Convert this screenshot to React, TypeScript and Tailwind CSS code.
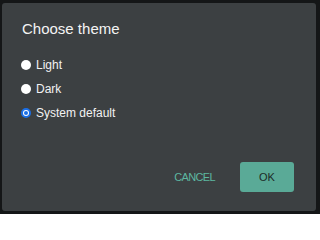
import React from "react";

function Radio({ checked, label }: { checked?: boolean; label: string }) {
  return (
    <div className="flex items-center h-6 gap-[5px]">
      {checked ? (
        <span className="w-[10px] h-[10px] rounded-full border-2 border-[#1b6fe6] bg-white flex items-center justify-center">
          <span className="w-[4px] h-[4px] rounded-full bg-[#1b6fe6]" />
        </span>
      ) : (
        <span className="w-[10px] h-[10px] rounded-full bg-white" />
      )}
      <span className="text-[12px] leading-[14px] text-[#f2f2f2]">{label}</span>
    </div>
  );
}

export default function App() {
  return (
    <div
      className="w-[320px] h-[214px] bg-[#141617] pt-[3px] pl-[2px]"
      style={{ fontFamily: '"Liberation Sans", Arial, sans-serif' }}
    >
      <div className="w-[314px] h-[208px] bg-[#3c4042] rounded-[3px] flex flex-col pl-[19px] pr-[22px] pt-[17px] pb-[19px]">
        <div className="text-[15px] leading-[18px] text-[#f4f4f4] pl-px">Choose theme</div>
        <div className="flex flex-col mt-[14.5px]">
          <Radio label="Light" />
          <Radio label="Dark" />
          <Radio checked label="System default" />
        </div>
        <div className="mt-auto flex items-center justify-end gap-[25px]">
          <span className="text-[11px] tracking-[-0.06em] text-[#5cb7a0]">CANCEL</span>
          <div className="w-[54px] h-[30px] rounded-[3px] bg-[#5aaa97] flex items-center justify-center text-[11px] text-[#1c2a27]">
            OK
          </div>
        </div>
      </div>
    </div>
  );
}
